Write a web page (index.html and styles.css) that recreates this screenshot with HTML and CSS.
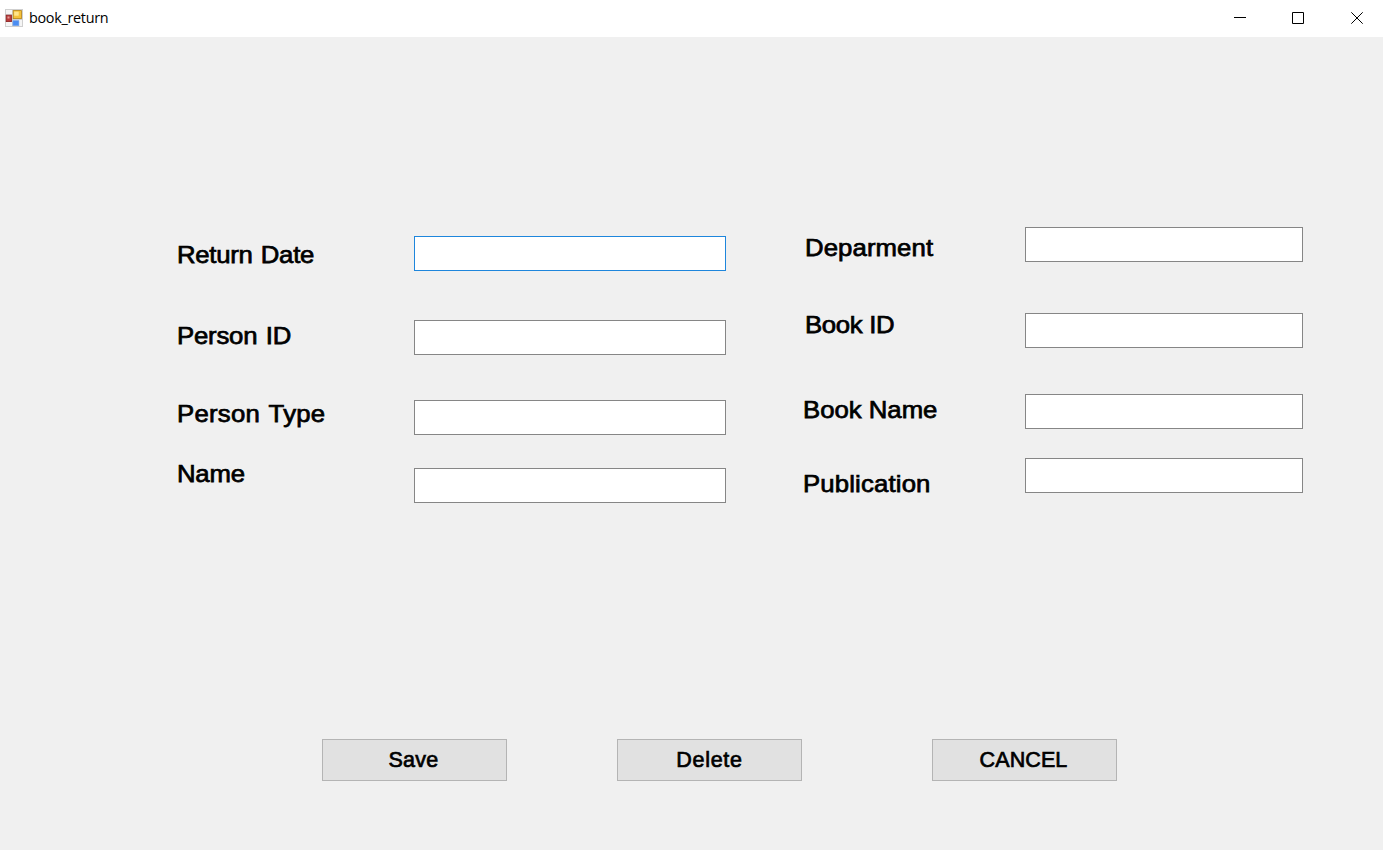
FILE: index.html
```html
<!DOCTYPE html>
<html lang="en">
<head>
<meta charset="utf-8">
<title>book_return</title>
<link rel="stylesheet" href="styles.css">
</head>
<body>
<div class="window">
  <header class="titlebar">
    <svg class="app-icon" width="18" height="18" viewBox="0 0 18 18">
      <rect width="18" height="18" fill="#cfcfcf"/>
      <path d="M1 1h6v4H1zM1 13h6v4H1zM14 11h3v6h-3z" fill="#f5f5f5"/>
      <rect x="1.2" y="6.2" width="5.2" height="6.4" fill="#b93a3a" stroke="#8f2020" stroke-width=".8"/>
      <rect x="2.5" y="7.5" width="2" height="2" fill="#e59a96"/>
      <rect x="8.2" y="1.6" width="8.2" height="8" fill="#f4c13a" stroke="#b98514" stroke-width=".8"/>
      <rect x="9.2" y="2.7" width="4.5" height="4" fill="#ffe48a"/>
      <rect x="7.9" y="11.7" width="6" height="5" fill="#4b8df2" stroke="#7aa8ee" stroke-width=".6"/>
    </svg>
    <span class="title">book_return</span>
    <div class="controls">
      <svg width="12" height="12" viewBox="0 0 12 12"><path d="M0 5.5h12"/></svg>
      <svg width="12" height="12" viewBox="0 0 12 12"><path d="M.5.5h11v11H.5z"/></svg>
      <svg width="12" height="12" viewBox="0 0 12 12"><path d="M.3.3l11.4 11.4M11.7.3L.3 11.7"/></svg>
    </div>
  </header>
  <main class="form">
    <div class="labels labels-person">
      <label class="return-date" for="return-date">Return Date</label>
      <label class="person-id" for="person-id">Person ID</label>
      <label class="person-type" for="person-type">Person Type</label>
      <label class="name" for="name">Name</label>
    </div>
    <div class="fields fields-person">
      <input id="return-date" class="active" type="text">
      <input id="person-id" type="text">
      <input id="person-type" type="text">
      <input id="name" type="text">
    </div>
    <div class="labels labels-book">
      <label class="department" for="department">Deparment</label>
      <label class="book-id" for="book-id">Book ID</label>
      <label class="book-name" for="book-name">Book Name</label>
      <label class="publication" for="publication">Publication</label>
    </div>
    <div class="fields fields-book">
      <input id="department" type="text">
      <input id="book-id" type="text">
      <input id="book-name" type="text">
      <input id="publication" type="text">
    </div>
  </main>
  <footer class="actions">
    <button class="save" type="button">Save</button>
    <button class="delete" type="button">Delete</button>
    <button class="cancel" type="button">CANCEL</button>
  </footer>
</div>
</body>
</html>
```
FILE: styles.css
```css
* { box-sizing: border-box; }
body { margin: 0; font-family: "Liberation Sans", Arial, sans-serif; color: #000; }
.window { width: 1383px; height: 850px; display: flex; flex-direction: column; background: #f0f0f0; overflow: hidden; }

.titlebar { height: 37px; flex: none; display: flex; align-items: center; padding: 0 20px 2px 5px; background: #fff; }
.app-icon { flex: none; }
.title { margin-left: 6px; font: 14.4px/20px "Open Sans", sans-serif; letter-spacing: -0.3px; padding-top: 1px; }
.controls { display: flex; gap: 47px; margin-left: auto; }
.controls svg { display: block; fill: none; stroke: #000; stroke-width: 1; }
.controls svg:nth-child(2) { margin-left: -1px; }

.form { display: flex; height: 702px; flex: none; }
.labels, .fields { display: flex; flex-direction: column; }
.labels label { align-self: flex-start; font-size: 24.5px; line-height: 28px; white-space: nowrap; -webkit-text-stroke: 0.75px #000; transform: scaleX(1.05); transform-origin: left; }
.labels-person { width: 237px; margin-left: 177px; padding-top: 204px; }
.return-date { letter-spacing: -0.25px; word-spacing: 1.2px; }
.person-id { margin-top: 53px; letter-spacing: -0.2px; word-spacing: 1.5px; }
.person-type { margin-top: 50px; letter-spacing: 0.25px; word-spacing: 1.5px; }
.name { margin-top: 32px; letter-spacing: -0.2px; }
.labels-book { width: 221px; margin-left: 79px; padding-top: 197px; }
.department { letter-spacing: 0.1px; }
.book-id { margin-top: 49px; letter-spacing: -0.3px; }
.book-name { margin-top: 57px; }
.publication { margin-top: 46px; letter-spacing: 0.15px; }
.labels .book-name, .labels .publication { margin-left: -2.5px; }

.fields input { height: 35px; width: 100%; border: 1px solid #868686; background: #fff; padding: 0 6px; border-radius: 0; outline: none; font: 22px "Liberation Sans", sans-serif; }
.fields input.active { border-color: #1e86dc; }
.fields-person { width: 312px; margin-top: 199px; }
#person-id { margin-top: 49px; }
#person-type { margin-top: 45px; }
#name { margin-top: 33px; }
.fields-book { width: 278px; margin-top: 190px; margin-left: -1px; }
#book-id { margin-top: 51px; }
#book-name { margin-top: 46px; }
#publication { margin-top: 29px; }

.actions { display: flex; padding-left: 322px; }
.actions button { width: 185px; height: 42px; margin: 0; padding: 0 2px 0 0; border: 1px solid #b4b4b4; border-radius: 0; background: #e1e1e1; color: #000; font: 21.5px/28px "Liberation Sans", Arial, sans-serif; letter-spacing: 0.3px; -webkit-text-stroke: 0.7px #000; }
.actions .delete { margin-left: 110px; padding: 0; letter-spacing: 0.7px; }
.actions .cancel { margin-left: 130px; letter-spacing: 0.1px; }
```
